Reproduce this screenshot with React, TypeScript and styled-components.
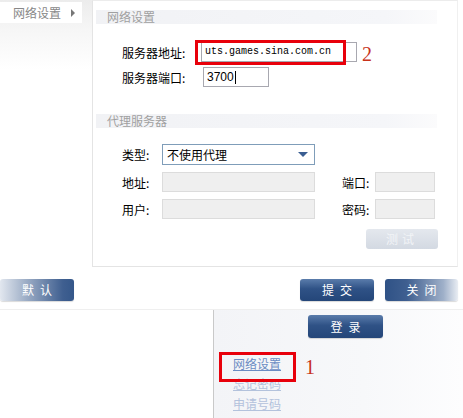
import React from 'react';
import styled, {createGlobalStyle} from 'styled-components';

const Global = createGlobalStyle`
  body {
    margin: 0;
    background: #fff;
    font-family: "Noto Sans CJK SC", "Liberation Sans", sans-serif;
    font-size: 12px;
  }
`

const Page = styled.div`
  width: 463px;
  height: 418px;
  overflow: hidden;
  position: relative;
`

const Top = styled.div`
  display: flex;
  height: 267px;
`

const Sidebar = styled.div`
  width: 92px;
  padding-top: 2px;
  background: linear-gradient(#ececec, #f6f6f6 30px, #fff 70px);
  box-sizing: border-box;
`

const Tab = styled.div`
  width: 82px;
  height: 21px;
  background: #fff;
  display: flex;
  align-items: center;
  padding-left: 13px;
  box-sizing: border-box;
  color: #888;
  line-height: 21px;
`

const TabArrow = styled.span`
  margin-left: 10px;
  width: 0;
  height: 0;
  border-top: 4px solid transparent;
  border-bottom: 4px solid transparent;
  border-left: 4px solid #777;
`

const Panel = styled.div`
  width: 366px;
  border-left: 1px solid #e4e4e4;
  border-top: 1px solid #ececec;
  border-bottom: 1px solid #e4e4e4;
  border-right: 1px solid #f0f0f0;
  box-sizing: border-box;
  padding: 9px 0 0 3px;
  position: relative;
`

const SectionTitle = styled.div<{ $mt?: number }>`
  width: 341px;
  height: 14px;
  line-height: 14px;
  margin-top: ${(p) => p.$mt || 0}px;
  padding-left: 11px;
  box-sizing: border-box;
  color: #a0a0a0;
  background: linear-gradient(to right, #f1f2f5, #f5f6f9 85%, #fbfbfc);
`

const ServerRows = styled.div`
  margin-top: 18px;
  padding-left: 26px;
  display: flex;
  flex-direction: column;
  gap: 5px;
`

const Row = styled.div`
  display: flex;
  align-items: center;
  position: relative;
`

const Label = styled.span<{ $w: number }>`
  width: ${(p) => p.$w}px;
  color: #000;
  white-space: nowrap;
`

const TextBox = styled.div<{ $w: number; $disabled?: boolean; $h?: number }>`
  width: ${(p) => p.$w}px;
  height: ${(p) => p.$h || 20}px;
  box-sizing: border-box;
  border: 1px solid ${(p) => (p.$disabled ? '#dcdcdc' : '#a8a8b0')};
  background: ${(p) => (p.$disabled ? '#efefef' : '#fff')};
  font-family: "Liberation Mono", monospace;
  font-size: 10px;
  line-height: 18px;
  padding-left: 3px;
  color: #000;
  display: flex;
  align-items: center;
`

const PortText = styled.span`
  font-family: "Liberation Sans", sans-serif;
  font-size: 12px;
  border-right: 1px solid #000;
  padding-right: 1px;
  line-height: 13px;
`

const RedBox = styled.div`
  position: absolute;
  left: 73px;
  top: -2px;
  width: 151px;
  height: 25px;
  border: 3px solid #e8000b;
  box-sizing: border-box;
`

const Mark = styled.span<{ $l: number; $t: number }>`
  position: absolute;
  left: ${(p) => p.$l}px;
  top: ${(p) => p.$t}px;
  color: #c8321b;
  font-family: "Liberation Serif", serif;
  font-size: 20px;
  line-height: 20px;
`

const ProxyGrid = styled.div`
  margin-top: 16px;
  padding-left: 26px;
  display: grid;
  grid-template-columns: 40px 153px 27px 33px 60px;
  grid-template-rows: 21px 20px 20px;
  row-gap: 7px;
  align-items: center;
`

const Select = styled.div`
  width: 153px;
  height: 21px;
  box-sizing: border-box;
  border: 1px solid #7f9db9;
  display: flex;
  align-items: center;
  justify-content: space-between;
  padding: 0 6px 0 4px;
  font-size: 12px;
`

const SelectArrow = styled.span`
  width: 0;
  height: 0;
  border-left: 5px solid transparent;
  border-right: 5px solid transparent;
  border-top: 5px solid #3a5e92;
`

const TestRow = styled.div`
  display: flex;
  justify-content: flex-end;
  width: 342px;
  margin-top: 10px;
`

const TestButton = styled.div`
  width: 72px;
  height: 20px;
  border-radius: 3px;
  background: linear-gradient(#e4e8ee, #d3d9e2);
  color: #f2f4f7;
  text-align: center;
  line-height: 20px;
  letter-spacing: 4px;
`

const ButtonBar = styled.div`
  display: flex;
  align-items: center;
  margin-top: 12px;
  height: 22px;
  padding-right: 5px;
  gap: 11px;
`

const Spacer = styled.div`
  flex: 1;
`

const Button = styled.div<{ $fade?: 'left' | 'right'; $w?: number; $h?: number }>`
  width: ${(p) => p.$w || 74}px;
  height: ${(p) => p.$h || 22}px;
  border-radius: 3px;
  color: #fff;
  font-size: 12px;
  text-align: center;
  line-height: ${(p) => p.$h || 22}px;
  letter-spacing: 6px;
  text-indent: 6px;
  box-shadow: 0 1px 1px rgba(0, 0, 0, 0.15);
  background: ${(p) =>
    p.$fade === 'left'
      ? 'linear-gradient(to right, #e2e7ef, #a7b6cc 30%, #3f5f90 85%, #35578a)'
      : p.$fade === 'right'
        ? 'linear-gradient(to right, #2f5286, #3f5f90 30%, #9fb0c9 80%, #e9edf3)'
        : 'linear-gradient(#5a7cab, #2f5286 45%, #244679)'};
`

const Bottom = styled.div`
  display: flex;
  margin-top: 8px;
  border-top: 1px solid #efefef;
  height: 110px;
`

const BottomLeft = styled.div`
  width: 213px;
  border-right: 1px solid #c9c9c9;
`

const BottomRight = styled.div`
  flex: 1;
  background: linear-gradient(to right, #f3f4f7, #f7f8fa 60%, #fdfdfe);
  padding-top: 5px;
  position: relative;
`

const LoginWrap = styled.div`
  padding-left: 94px;
`

const Links = styled.div`
  margin-top: 16px;
  padding-left: 19px;
  display: flex;
  flex-direction: column;
`

const LinkBox = styled.div`
  position: absolute;
  left: 5px;
  top: 42px;
  width: 77px;
  height: 30px;
  border: 3px solid #e8000b;
  box-sizing: border-box;
`

const Link = styled.a<{ $faded?: boolean }>`
  font-size: 12px;
  line-height: 20px;
  color: ${(p) => (p.$faded ? '#b3c2dc' : '#6b8cc3')};
  text-decoration: underline;
  width: fit-content;
`

export default function App() {
    return (
        <Page>
            <Global/>
            <Top>
                <Sidebar>
                    <Tab>网络设置<TabArrow/></Tab>
                </Sidebar>
                <Panel>
                    <SectionTitle>网络设置</SectionTitle>
                    <ServerRows>
                        <Row>
                            <Label $w={79}>服务器地址:</Label>
                            <TextBox $w={156}>uts.games.sina.com.cn</TextBox>
                            <RedBox/>
                            <Mark $l={240} $t={2}>2</Mark>
                        </Row>
                        <Row>
                            <Label $w={81}>服务器端口:</Label>
                            <TextBox $w={66}><PortText>3700</PortText></TextBox>
                        </Row>
                    </ServerRows>
                    <SectionTitle $mt={27}>代理服务器</SectionTitle>
                    <ProxyGrid>
                        <Label $w={40}>类型:</Label>
                        <Select>不使用代理<SelectArrow/></Select>
                        <span/>
                        <span/>
                        <span/>
                        <Label $w={40}>地址:</Label>
                        <TextBox $w={153} $disabled/>
                        <span/>
                        <Label $w={33}>端口:</Label>
                        <TextBox $w={60} $disabled/>
                        <Label $w={40}>用户:</Label>
                        <TextBox $w={153} $disabled/>
                        <span/>
                        <Label $w={33}>密码:</Label>
                        <TextBox $w={60} $disabled/>
                    </ProxyGrid>
                    <TestRow>
                        <TestButton>测试</TestButton>
                    </TestRow>
                </Panel>
            </Top>
            <ButtonBar>
                <Button $fade="left">默认</Button>
                <Spacer/>
                <Button>提交</Button>
                <Button $fade="right" $w={73}>关闭</Button>
            </ButtonBar>
            <Bottom>
                <BottomLeft/>
                <BottomRight>
                    <LoginWrap>
                        <Button $w={75} $h={23}>登录</Button>
                    </LoginWrap>
                    <LinkBox/>
                    <Mark $l={91} $t={47}>1</Mark>
                    <Links>
                        <Link>网络设置</Link>
                        <Link $faded>忘记密码</Link>
                        <Link $faded>申请号码</Link>
                    </Links>
                </BottomRight>
            </Bottom>
        </Page>
    );
}
